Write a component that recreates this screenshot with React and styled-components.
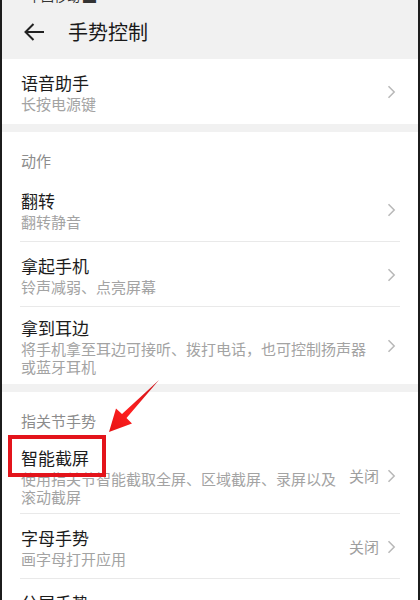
import React from 'react';
import styled, { createGlobalStyle } from 'styled-components';

const GlobalStyle = createGlobalStyle`
  html, body {
    margin: 0;
    padding: 0;
    background: #f1f1f1;
  }
  body {
    font-family: "Noto Sans CJK SC", "Noto Sans", sans-serif;
  }
`;

const Screen = styled.div`
  position: relative;
  width: 420px;
  height: 600px;
  box-sizing: border-box;
  overflow: hidden;
  background: #f1f1f1;
  border-left: 2px solid #1c1c1c;
  border-right: 2px solid #1c1c1c;
  display: flex;
  flex-direction: column;
  & > * {
    flex-shrink: 0;
  }
`;

const StatusBar = styled.div`
  height: 5px;
  overflow: hidden;
  padding-left: 26px;
  span {
    display: block;
    margin-top: -12px;
    font-size: 13px;
    line-height: 16px;
    color: #333;
  }
`;

const Header = styled.div`
  height: 54px;
  display: flex;
  align-items: center;
  padding-left: 21px;
  gap: 23px;
`;

const Title = styled.h1`
  margin: 0;
  font-size: 20px;
  font-weight: 400;
  color: #1a1a1a;
  line-height: 28px;
`;

const Card = styled.section`
  background: #fff;
  & + & {
    margin-top: 8px;
  }
`;

const SectionLabel = styled.div`
  padding: 18px 19px 5px;
  font-size: 15px;
  line-height: 22px;
  color: #8c8c8c;
`;

const Row = styled.div`
  position: relative;
  min-height: 65px;
  box-sizing: border-box;
  padding: 9px 22px 8px 19px;
  display: flex;
  align-items: center;
  &:not(:last-child)::after {
    content: "";
    position: absolute;
    left: 18px;
    right: 18px;
    bottom: 0;
    height: 1px;
    background: #e9e9e9;
  }
`;

const TextBlock = styled.div`
  flex: 1;
  min-width: 0;
`;

const RowTitle = styled.div`
  position: relative;
  display: inline-block;
  font-size: 17px;
  line-height: 24px;
  color: #1c1c1c;
`;

const RowDesc = styled.div`
  font-size: 15px;
  line-height: 18px;
  color: #a3a3a3;
`;

const Trailing = styled.div`
  margin-left: 12px;
  display: flex;
  align-items: center;
  gap: 8px;
`;

const Value = styled.span`
  font-size: 15px;
  line-height: 20px;
  color: #9e9e9e;
`;

const Highlight = styled.span`
  position: absolute;
  left: -13px;
  right: -17px;
  top: -11px;
  bottom: -7px;
  border: 4px solid #e3141b;
  pointer-events: none;
`;

const Annotation = styled.svg`
  position: absolute;
  left: 0;
  top: 0;
  pointer-events: none;
`;

const Chevron = () => (
  <svg width="9" height="14" viewBox="0 0 9 14">
    <path d="M1.5 1.2 L7.2 7 L1.5 12.8" fill="none" stroke="#b8b8b8" strokeWidth="1.5" />
  </svg>
);

const BackArrow = () => (
  <svg width="22" height="20" viewBox="0 0 22 20">
    <path d="M21 10 H2.5 M10.5 2 L2.5 10 L10.5 18" fill="none" stroke="#222" strokeWidth="2" />
  </svg>
);

function Item({ title, desc, value, highlight }) {
  return (
    <Row>
      <TextBlock>
        <RowTitle>
          {title}
          {highlight && <Highlight />}
        </RowTitle>
        <RowDesc>{desc}</RowDesc>
      </TextBlock>
      <Trailing>
        {value && <Value>{value}</Value>}
        <Chevron />
      </Trailing>
    </Row>
  );
}

export default function App() {
  return (
    <>
      <GlobalStyle />
      <Screen>
        <StatusBar><span>中国移动 ▆</span></StatusBar>
        <Header>
          <BackArrow />
          <Title>手势控制</Title>
        </Header>
        <Card>
          <Item title="语音助手" desc="长按电源键" />
        </Card>
        <Card>
          <SectionLabel>动作</SectionLabel>
          <Item title="翻转" desc="翻转静音" />
          <Item title="拿起手机" desc="铃声减弱、点亮屏幕" />
          <Item title="拿到耳边" desc="将手机拿至耳边可接听、拨打电话，也可控制扬声器或蓝牙耳机" />
        </Card>
        <Card>
          <SectionLabel>指关节手势</SectionLabel>
          <Item title="智能截屏" desc="使用指关节智能截取全屏、区域截屏、录屏以及滚动截屏" value="关闭" highlight />
          <Item title="字母手势" desc="画字母打开应用" value="关闭" />
          <Item title="分屏手势" desc="指关节横划屏幕" />
        </Card>
        <Annotation width="420" height="600">
          <defs>
            <linearGradient id="arrowRed" x1="1" y1="0" x2="0" y2="1">
              <stop offset="0" stopColor="#c8141a" />
              <stop offset="0.6" stopColor="#ff2020" />
              <stop offset="1" stopColor="#e51414" />
            </linearGradient>
          </defs>
          <polygon
            points="157,380 124.5,418 130,423.5 107,432 114,408.5 120,414"
            fill="url(#arrowRed)"
          />
        </Annotation>
      </Screen>
    </>
  );
}
